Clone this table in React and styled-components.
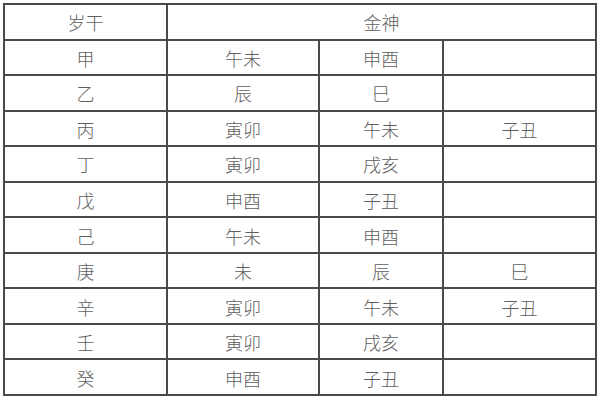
import React from "react";
import styled, { createGlobalStyle } from "styled-components";

const Global = createGlobalStyle`
  html, body { margin: 0; padding: 0; background: #fff; }
  body { width: 600px; height: 400px; overflow: hidden; }
  * { box-sizing: border-box; }
`;

const Page = styled.div`
  padding: 3px 0 0 3px;
`;

const Grid = styled.div`
  display: grid;
  grid-template-columns: 163px 152px 124px 153px;
  grid-template-rows: repeat(11, 1fr);
  width: 594px;
  height: 393px;
  border-top: 2px solid #4a4a4a;
  border-left: 2px solid #4a4a4a;
  font-family: "Noto Sans CJK SC", "Noto Sans", sans-serif;
  font-weight: 300;
  font-size: 18px;
  color: #5e5e5e;
`;

const Cell = styled.div`
  display: flex;
  align-items: center;
  justify-content: center;
  border-right: 2px solid #4a4a4a;
  border-bottom: 2px solid #4a4a4a;
  line-height: 1;
  padding-top: 1px;
  grid-column: ${(p) => (p.$span ? `span ${p.$span}` : "auto")};
`;

const rows = [
  ["甲", "午未", "申酉", ""],
  ["乙", "辰", "巳", ""],
  ["丙", "寅卯", "午未", "子丑"],
  ["丁", "寅卯", "戌亥", ""],
  ["戊", "申酉", "子丑", ""],
  ["己", "午未", "申酉", ""],
  ["庚", "未", "辰", "巳"],
  ["辛", "寅卯", "午未", "子丑"],
  ["壬", "寅卯", "戌亥", ""],
  ["癸", "申酉", "子丑", ""],
];

export default function App() {
  return (
    <>
      <Global />
      <Page>
        <Grid>
          <Cell>岁干</Cell>
          <Cell $span={3}>金神</Cell>
          {rows.map((r, i) =>
            r.map((c, j) => <Cell key={`${i}-${j}`}>{c}</Cell>)
          )}
        </Grid>
      </Page>
    </>
  );
}
